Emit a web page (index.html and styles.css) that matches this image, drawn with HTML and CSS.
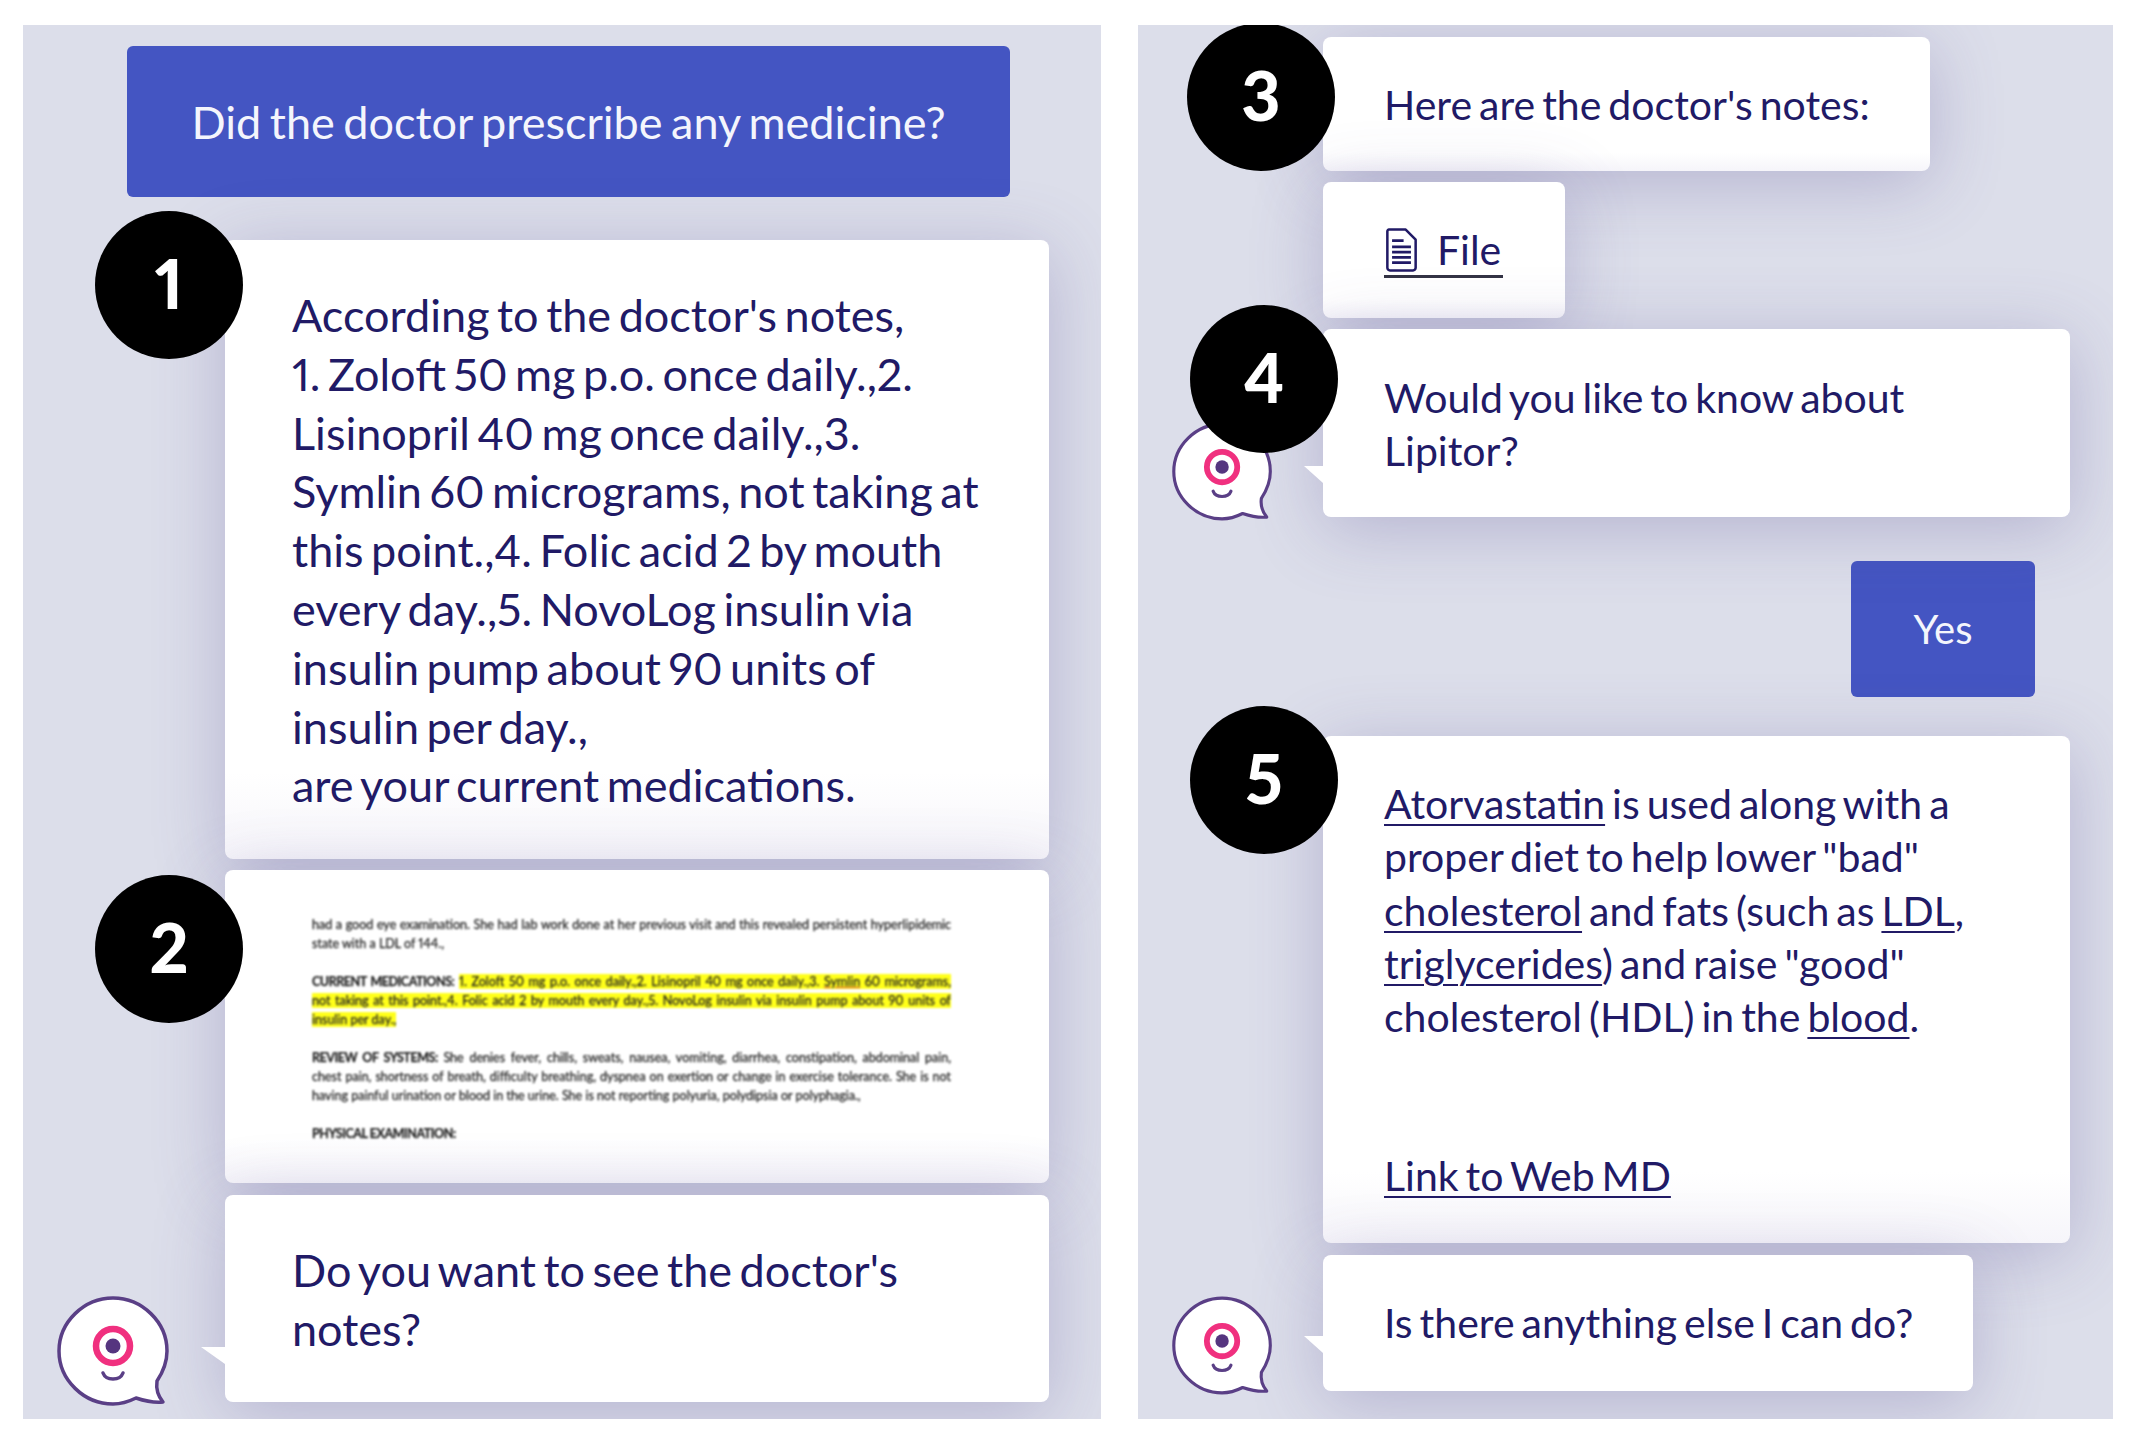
FILE: index.html
```html
<!DOCTYPE html>
<html lang="en">

<head>
  <meta charset="UTF-8">
  <meta name="viewport" content="width=device-width, initial-scale=1.0">
  <title>Chatbot conversation</title>
  <link rel="stylesheet" href="styles.css">
</head>

<body>
  <svg class="defs" width="0" height="0" aria-hidden="true">
    <symbol id="bot" viewBox="0 0 113 110">
      <path d="M56 2C27 2 2 26 2 55C2 84 27 108 56 108C64 108 71 106 79 102C88 105 97 107 106 106C101 100 99 92 100 85C106 76 110 66 110 55C110 26 85 2 56 2Z" fill="#fff" stroke="#5a3f86" stroke-width="3.5" stroke-linejoin="round" />
      <circle cx="56" cy="50" r="17" fill="#fff" stroke="#f0307f" stroke-width="6.5" />
      <circle cx="56" cy="50" r="7.5" fill="#55357f" />
      <path d="M46 77C49 85 63 85 66 77" fill="none" stroke="#5a3f86" stroke-width="3.5" stroke-linecap="round" />
    </symbol>
  </svg>

  <!-- left phone -->
  <div class="panel panel-left">
    <div class="question">Did the doctor prescribe any medicine?</div>

    <div class="card card-big card-answer fade">
      <span class="badge badge-1">1</span>
      According to the doctor's notes,<br>
      1. Zoloft 50 mg p.o. once daily.,2.<br>
      Lisinopril 40 mg once daily.,3.<br>
      Symlin 60 micrograms, not taking at<br>
      this point.,4. Folic acid 2 by mouth<br>
      every day.,5. NovoLog insulin via<br>
      insulin pump about 90 units of<br>
      insulin per day.,<br>
      are your current medications.
    </div>

    <div class="card card-doc fade">
      <span class="badge badge-2">2</span>
      <div class="doc">
        <p class="line">had a good eye examination. She had lab work done at her previous visit and this revealed persistent hyperlipidemic</p>
        <p class="line end">state with a LDL of 144.,</p>
        <p class="line gap"><b>CURRENT MEDICATIONS:</b> <mark>1. Zoloft 50 mg p.o. once daily.,2. Lisinopril 40 mg once daily.,3. <u>Symlin</u> 60 micrograms,</mark></p>
        <p class="line"><mark>not taking at this point.,4. Folic acid 2 by mouth every day.,5. NovoLog insulin via insulin pump about 90 units of</mark></p>
        <p class="line end"><mark>insulin per day.,</mark></p>
        <p class="line gap"><b>REVIEW OF SYSTEMS:</b> She denies fever, chills, sweats, nausea, vomiting, diarrhea, constipation, abdominal pain,</p>
        <p class="line">chest pain, shortness of breath, difficulty breathing, dyspnea on exertion or change in exercise tolerance. She is not</p>
        <p class="line end">having painful urination or blood in the urine. She is not reporting polyuria, polydipsia or polyphagia.,</p>
        <p class="line end gap"><b>PHYSICAL EXAMINATION:</b></p>
      </div>
    </div>

    <div class="card card-big card-see tail">
      <svg class="bot bot-big"><use href="#bot" /></svg>
      Do you want to see the doctor's<br>notes?
    </div>
  </div>

  <!-- right phone -->
  <div class="panel panel-right">
    <div class="card card-notes fade">
      <span class="badge badge-3">3</span>
      Here are the doctor's notes:
    </div>

    <div class="card card-file fade">
      <a class="file-link">
        <svg class="file-icon" viewBox="0 0 30 42">
          <path d="M3 1.5H19L28.5 11V38A2.5 2.5 0 0 1 26 40.5H4A2.5 2.5 0 0 1 1.5 38V3A1.5 1.5 0 0 1 3 1.5Z" fill="none" stroke="#211a66" stroke-width="2.4" stroke-linejoin="round" />
          <path d="M6 12H17M6 18H24M6 23H24M6 28H24M6 33H24" fill="none" stroke="#211a66" stroke-width="2.6" />
        </svg>
        File
      </a>
    </div>

    <div class="card card-lipitor tail">
      <svg class="bot bot-small"><use href="#bot" /></svg>
      <span class="badge badge-4">4</span>
      Would you like to know about<br>Lipitor?
    </div>

    <div class="yes">Yes</div>

    <div class="card card-info fade">
      <span class="badge badge-5">5</span>
      <a>Atorvastatin</a> is used along with a<br>
      proper diet to help lower "bad"<br>
      <a>cholesterol</a> and fats (such as <a>LDL</a>,<br>
      <a>triglycerides</a>) and raise "good"<br>
      cholesterol (HDL) in the <a>blood</a>.
      <div class="webmd"><a>Link to Web MD</a></div>
    </div>

    <div class="card card-else tail">
      <svg class="bot bot-small"><use href="#bot" /></svg>
      Is there anything else I can do?
    </div>
  </div>
</body>

</html>
```

FILE: styles.css
```css
* {
  box-sizing: border-box;
  margin: 0;
  padding: 0;
}

body {
  display: flex;
  gap: 37px;
  width: 2134px;
  height: 1436px;
  padding: 25px 21px 17px 23px;
  background-color: #ffffff;
  color: #211a66;
  font-family: 'Lato', 'Liberation Sans', sans-serif;
  font-variant-numeric: proportional-nums;
  overflow: hidden;
}

.defs {
  position: absolute;
}

.panel {
  position: relative;
  display: flex;
  flex-direction: column;
  height: 1394px;
  background-color: #dcdeea;
  overflow: hidden;
}

.panel-left {
  width: 1078px;
  padding-top: 21px;
}

.panel-right {
  width: 975px;
  padding-top: 12px;
}

.question,
.yes {
  display: flex;
  align-items: center;
  justify-content: center;
  background-color: #4455c2;
  color: #f4f5fc;
  border-radius: 6px;
}

.question {
  width: 883px;
  height: 151px;
  margin: 0 0 43px 104px;
  font-size: 45px;
  word-spacing: -3px;
}

.yes {
  align-self: flex-start;
  width: 184px;
  height: 136px;
  margin: 44px 0 39px 713px;
  font-size: 40px;
}

.card {
  position: relative;
  flex: none;
  background-color: #ffffff;
  border-radius: 8px;
  box-shadow: 0 12px 70px rgba(88, 78, 150, 0.3);
  font-size: 41px;
  word-spacing: -3.5px;
  line-height: 53.3px;
  padding-left: 61px;
}

.panel-left .card {
  width: 824px;
  margin-left: 202px;
  padding-left: 67px;
}

.panel-right .card {
  margin-left: 185px;
}

.card-big {
  font-size: 45px;
  word-spacing: -4px;
  line-height: 58.8px;
}

/* the grey fade near the bottom of the long bubbles */
.fade {
  background-image: linear-gradient(to bottom, #ffffff 86%, #f6f5fa 100%);
}

.card-answer {
  height: 619px;
  margin-bottom: 11px;
  padding-top: 46px;
}

.card-doc {
  height: 313px;
  margin-bottom: 12px;
  padding-top: 45px;
}

.card-see {
  height: 207px;
  padding-top: 46px;
}

.card-notes {
  width: 607px;
  height: 134px;
  margin-bottom: 11px;
  padding-top: 41px;
}

.card-file {
  width: 242px;
  height: 136px;
  margin-bottom: 11px;
  padding-top: 43px;
}

.card-lipitor {
  width: 747px;
  height: 188px;
  padding-top: 42px;
}

.card-info {
  width: 747px;
  height: 507px;
  margin-bottom: 12px;
  padding-top: 41px;
}

.card-else {
  width: 650px;
  height: 136px;
  padding-top: 41px;
}

.webmd {
  margin-top: 106px;
}

.card a {
  color: inherit;
  text-decoration: underline;
  text-decoration-thickness: 2px;
  text-underline-offset: 5px;
}

.file-link {
  display: inline-flex;
  align-items: center;
  gap: 18px;
}

.file-icon {
  width: 35px;
  height: 44px;
}

.card .file-link {
  text-decoration: none;
  border-bottom: 3px solid #333344;
  line-height: 50px;
  padding-right: 2px;
}

/* speech tail of a bot bubble */
.tail::before {
  content: "";
  position: absolute;
  left: -24px;
  bottom: 38px;
  border-right: 24px solid #ffffff;
  border-bottom: 17px solid transparent;
}

.panel-right .tail::before {
  left: -19px;
  border-right-width: 19px;
}

.panel-right .card-lipitor::before {
  bottom: 34px;
}

.bot {
  position: absolute;
  bottom: -4px;
}

.bot-big {
  left: -168px;
  width: 113px;
  height: 110px;
}

.bot-small {
  left: -151px;
  width: 101px;
  height: 99px;
}

.badge {
  position: absolute;
  display: flex;
  align-items: center;
  justify-content: center;
  width: 148px;
  height: 148px;
  padding-bottom: 4px;
  border-radius: 50%;
  background-color: #000000;
  color: #ffffff;
  font-size: 68px;
  font-weight: 900;
  word-spacing: 0;
  line-height: 1;
}

.badge-1 {
  left: -130px;
  top: -29px;
}

.badge-2 {
  left: -130px;
  top: 5px;
}

.badge-3 {
  left: -136px;
  top: -14px;
}

.badge-4 {
  left: -133px;
  top: -24px;
}

.badge-5 {
  left: -133px;
  top: -30px;
}

/* scanned page, slightly soft */
.doc {
  width: 639px;
  margin-left: 20px;
  color: #222222;
  font-size: 12.5px;
  word-spacing: 0;
  line-height: 19px;
  -webkit-text-stroke: 0.25px #222222;
  filter: blur(0.8px);
}

.doc b {
  letter-spacing: -0.45px;
}

.line {
  text-align: justify;
  text-align-last: justify;
  white-space: nowrap;
}

.line.end {
  text-align-last: left;
}

.line.gap {
  margin-top: 19px;
}

.doc mark {
  background-color: #ffff1a;
  color: inherit;
}

.doc u {
  text-decoration-color: #d9482b;
}
```
